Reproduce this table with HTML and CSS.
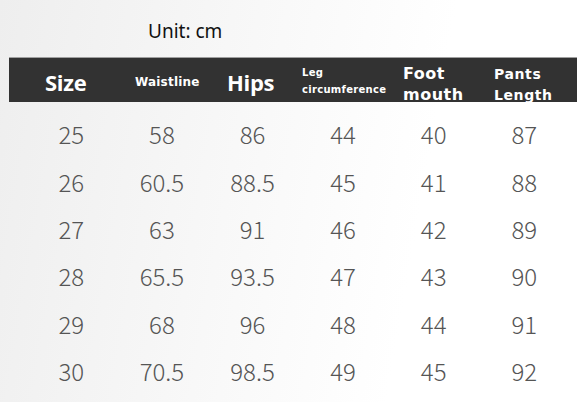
FILE: index.html
```html
<!DOCTYPE html>
<html>
<head>
<meta charset="utf-8">
<link rel="stylesheet" href="styles.css">
</head>
<body>
<div class="page">
  <div class="unit">Unit: cm</div>
  <div class="head">
    <div class="h h-size">Size</div>
    <div class="h h-waist">Waistline</div>
    <div class="h h-hips">Hips</div>
    <div class="h h-leg">Leg<br>circumference</div>
    <div class="h h-foot">Foot<br>mouth</div>
    <div class="h h-pants">Pants<br>Length</div>
  </div>
  <div class="rows">
    <div class="row"><span>25</span><span>58</span><span>86</span><span>44</span><span>40</span><span>87</span></div>
    <div class="row"><span>26</span><span>60.5</span><span>88.5</span><span>45</span><span>41</span><span>88</span></div>
    <div class="row"><span>27</span><span>63</span><span>91</span><span>46</span><span>42</span><span>89</span></div>
    <div class="row"><span>28</span><span>65.5</span><span>93.5</span><span>47</span><span>43</span><span>90</span></div>
    <div class="row"><span>29</span><span>68</span><span>96</span><span>48</span><span>44</span><span>91</span></div>
    <div class="row"><span>30</span><span>70.5</span><span>98.5</span><span>49</span><span>45</span><span>92</span></div>
  </div>
</div>
</body>
</html>
```
FILE: styles.css
```css
html, body {
  margin: 0;
  padding: 0;
}
body {
  width: 583px;
  height: 402px;
  overflow: hidden;
  background: linear-gradient(100deg, #eeeeee 0%, #f8f8f8 40%, #ffffff 70%);
}
.page {
  padding-top: 18px;
}
.unit {
  margin-left: 148px;
  font-family: "Noto Sans", sans-serif;
  font-size: 19px;
  line-height: 26px;
  color: #111;
  height: 39px;
}
.head {
  margin-left: 9px;
  width: 568px;
  height: 45px;
  box-sizing: border-box;
  background: #323232;
  border-top: 1px solid #a0a0a0;
  display: grid;
  grid-template-columns: 36px 90px 92px 75px 101px 91px 1fr;
  align-items: center;
  color: #fff;
  font-weight: bold;
}
.h-size { grid-column: 2; }
.h {
  font-family: "DejaVu Sans", sans-serif;
  white-space: nowrap;
}
.h-size, .h-hips {
  font-family: "Open Sans", sans-serif;
  font-size: 22px;
  letter-spacing: -0.3px;
}
.h-waist {
  font-size: 12px;
  letter-spacing: 0.2px;
}
.h-leg {
  font-size: 10px;
  line-height: 17px;
  letter-spacing: 0.3px;
  margin-top: -2px;
}
.h-foot {
  font-size: 16px;
  line-height: 21px;
  letter-spacing: 0.5px;
  margin-top: 4px;
}
.h-pants {
  font-size: 14px;
  line-height: 21px;
  letter-spacing: 0.6px;
  margin-top: 6px;
}
.rows {
  margin-top: 8px;
  padding-left: 26px;
}
.row {
  display: grid;
  grid-template-columns: repeat(6, 90.6px);
  height: 47.4px;
  align-items: center;
  font-family: "Noto Sans CJK SC", "Noto Sans", sans-serif;
  font-weight: 300;
  font-size: 24px;
  color: #555;
  text-align: center;
}
```
